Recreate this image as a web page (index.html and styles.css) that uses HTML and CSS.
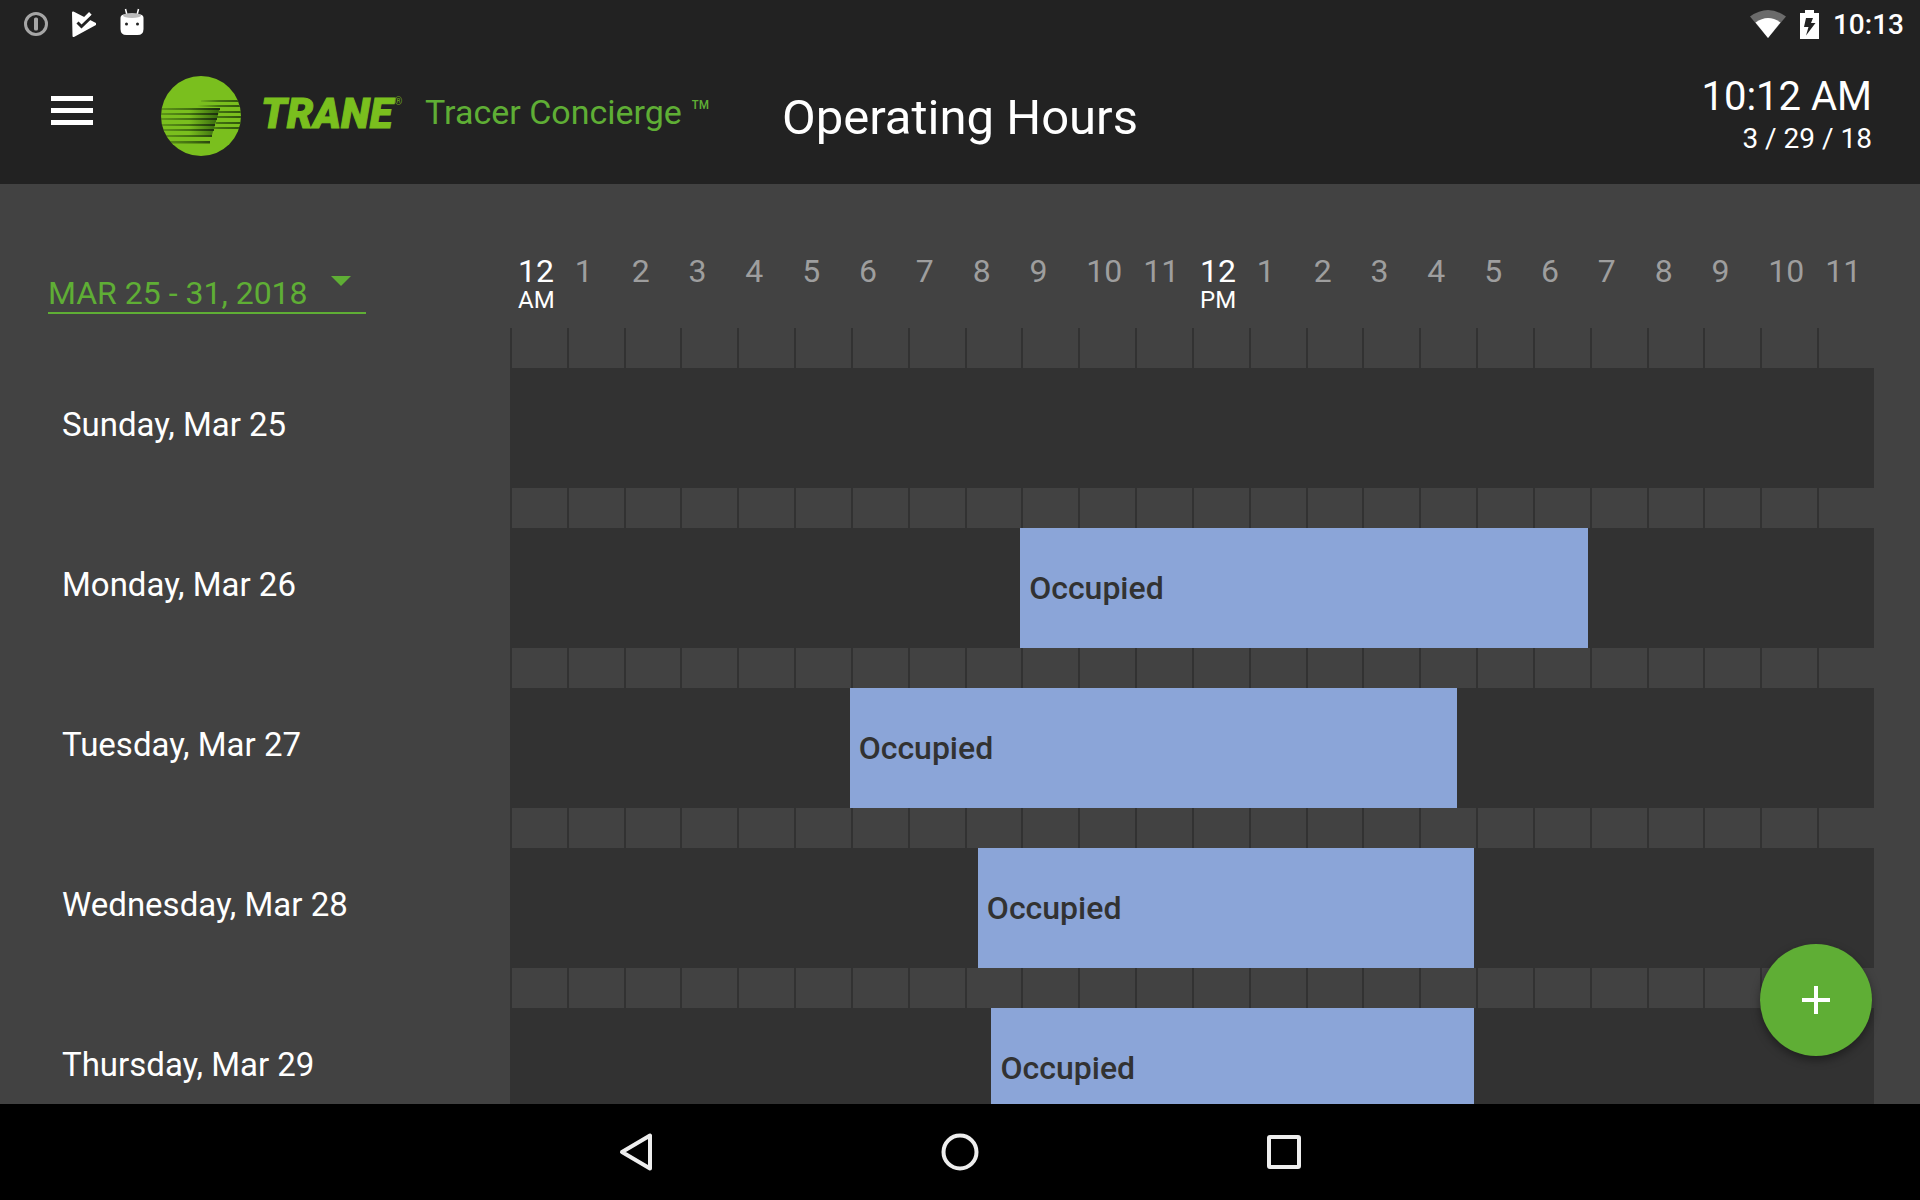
FILE: index.html
```html
<!DOCTYPE html>
<html lang="en">
<head>
<meta charset="utf-8">
<title>Operating Hours</title>
<link rel="stylesheet" href="styles.css">
</head>
<body>
<div class="status-bar">
  <div class="status-group notices">
    <svg class="status-icon" viewBox="0 0 24 32" aria-hidden="true"><circle cx="12" cy="16" r="10.500" fill="none" stroke="#a6a6a6" stroke-width="3"/><rect x="10" y="9.500" width="4" height="13" rx="1.500" fill="#a6a6a6"/></svg>
    <svg class="status-icon" viewBox="0 0 24 32" aria-hidden="true"><path d="M1 4.500 23.500 16 1.500 28z" fill="#fff" stroke="#fff" stroke-width="2" stroke-linejoin="round"/><path d="M12.500 8.500 17.500 5 20 8l-4 4" fill="#222"/><path d="m9.500 14.500 9-9" stroke="#fff" stroke-width="4" fill="none"/><path d="m5.500 14.500 4 4L22 6.500" stroke="#222" stroke-width="3" fill="none"/></svg>
    <svg class="status-icon" viewBox="0 0 24 32" aria-hidden="true"><path d="m5.500 1 1.500 6M18.500 1 17 7" stroke="#fff" stroke-width="1.500"/><path d="M.500 10q0-3 3-3.500h17q3 .500 3 3.500v11q0 6-6 6h-11q-6 0-6-6z" fill="#fff"/><ellipse cx="12" cy="7.500" rx="9" ry="2.500" fill="#bbb"/><circle cx="6.500" cy="16" r="1.500" fill="#222"/><circle cx="17.500" cy="16" r="1.500" fill="#222"/></svg>
  </div>
  <div class="status-group system">
    <svg class="wifi" viewBox="0 0 36 28" aria-hidden="true"><path d="M18 28 0 6.500Q18-6.500 36 6.500z" fill="#6b6b6b"/><path d="M18 28 5.500 12.500q12.500-9 25 0z" fill="#fff"/></svg>
    <svg class="battery" viewBox="0 0 19 29" aria-hidden="true"><path d="M0 3h5V0h9v3h5v26H0z" fill="#fff"/><path d="M6 8h7l-2 5h4.500L6 25.500 8.500 17H4z" fill="#222"/></svg>
    <span class="status-clock">10:13</span>
  </div>
</div>

<header class="app-bar">
  <button class="menu" type="button" aria-label="Menu"><span></span><span></span><span></span></button>
  <div class="brand">
    <svg class="emblem" viewBox="0 0 80 80" aria-hidden="true">
      <defs>
        <clipPath id="disc"><circle cx="40" cy="40" r="40"/></clipPath>
        <linearGradient id="fade-left" gradientUnits="userSpaceOnUse" x1="0" y1="0" x2="59" y2="0"><stop offset="0" stop-color="#1d3a08" stop-opacity=".3"/><stop offset=".5" stop-color="#1d3a08" stop-opacity=".6"/><stop offset="1" stop-color="#1a2810" stop-opacity=".95"/></linearGradient>
        <linearGradient id="fade-right" gradientUnits="userSpaceOnUse" x1="36" y1="0" x2="80" y2="0"><stop offset="0" stop-color="#1d3a08" stop-opacity="0"/><stop offset=".5" stop-color="#1d3a08" stop-opacity=".6"/><stop offset="1" stop-color="#1d3a08" stop-opacity=".8"/></linearGradient>
        <linearGradient id="stem" gradientUnits="userSpaceOnUse" x1="28" y1="0" x2="56" y2="0"><stop offset="0" stop-color="#24500a" stop-opacity="0"/><stop offset="1" stop-color="#24500a" stop-opacity=".75"/></linearGradient>
      </defs>
      <g clip-path="url(#disc)">
        <rect width="80" height="80" fill="#7abf1e"/>
        <path d="M28 32h31l-8 27H28z" fill="url(#stem)"/>
        <path d="M0 32h59v2H0zM0 37h57v2H0zM0 42h56v2H0zM0 48h54v2H0zM0 53h53v2H0zM0 59h51v2H0zM0 65h49v2.500H0z" fill="url(#fade-left)"/>
        <path d="M40 24h40v2H40zM36 29h44v2H36zM58 35h22v2H58zM56 40h24v2H56zM55 46h25v2H55zM53 51h27v2H53z" fill="url(#fade-right)"/>
      </g>
    </svg>
    <div class="wordmark">TRANE<sup>®</sup></div>
    <div class="product">Tracer Concierge ™</div>
  </div>
  <h1>Operating Hours</h1>
  <div class="now"><div class="time">10:12 AM</div><div class="date">3 / 29 / 18</div></div>
</header>

<main>
  <div class="chart-head">
    <div class="week">
      <select aria-label="Week"><option>MAR 25 - 31, 2018</option></select>
      <svg class="caret" viewBox="0 0 20 10" aria-hidden="true"><path d="M0 0h20L10 10z" fill="#5fae35"/></svg>
    </div>
    <div class="hours">
      <div class="noon">12<small>AM</small></div><div>1</div><div>2</div><div>3</div><div>4</div><div>5</div><div>6</div><div>7</div><div>8</div><div>9</div><div>10</div><div>11</div>
      <div class="noon">12<small>PM</small></div><div>1</div><div>2</div><div>3</div><div>4</div><div>5</div><div>6</div><div>7</div><div>8</div><div>9</div><div>10</div><div>11</div>
    </div>
  </div>
  <div class="chart">
    <div class="ticks" aria-hidden="true"><i></i><i></i><i></i><i></i><i></i><i></i><i></i><i></i><i></i><i></i><i></i><i></i><i></i><i></i><i></i><i></i><i></i><i></i><i></i><i></i><i></i><i></i><i></i><i></i></div>
    <div class="days">
      <div class="day"><div class="day-name">Sunday, Mar 25</div><div class="track"></div></div>
      <div class="day"><div class="day-name">Monday, Mar 26</div><div class="track"><button type="button" class="slot" style="margin-left:37.4%;width:41.6%">Occupied</button></div></div>
      <div class="day"><div class="day-name">Tuesday, Mar 27</div><div class="track"><button type="button" class="slot" style="margin-left:24.9%;width:44.5%">Occupied</button></div></div>
      <div class="day"><div class="day-name">Wednesday, Mar 28</div><div class="track"><button type="button" class="slot" style="margin-left:34.3%;width:36.4%">Occupied</button></div></div>
      <div class="day"><div class="day-name">Thursday, Mar 29</div><div class="track"><button type="button" class="slot" style="margin-left:35.3%;width:35.4%">Occupied</button></div></div>
    </div>
  </div>
  <button class="add" type="button" aria-label="Add"><svg viewBox="0 0 28 28" aria-hidden="true"><path d="M12 0h4v12h12v4H16v12h-4V16H0v-4h12z" fill="#fff"/></svg></button>
</main>

<nav class="nav-bar">
  <button type="button" aria-label="Back"><svg viewBox="0 0 40 40" aria-hidden="true"><path d="M34 3.500v33L6 20z"/></svg></button>
  <button type="button" aria-label="Home"><svg viewBox="0 0 40 40" aria-hidden="true"><circle cx="20" cy="20" r="16.500"/></svg></button>
  <button type="button" aria-label="Recent apps"><svg viewBox="0 0 40 40" aria-hidden="true"><rect x="5" y="5" width="30" height="30" rx="1"/></svg></button>
</nav>
</body>
</html>
```

FILE: styles.css
```css
*{box-sizing:border-box}
body{
  margin:0;
  height:100vh;
  display:flex;
  flex-direction:column;
  background:#424242;
  color:#fff;
  font-family:Roboto,sans-serif;
  font-size:32px;
  line-height:38px;
}
button,select{font:inherit;color:inherit;border:0;padding:0;margin:0;background:none;border-radius:0}

.status-bar{flex:none;display:flex;justify-content:space-between;align-items:center;background:#222;height:48px;padding:0 16px 0 24px}
.status-group{display:flex;align-items:center}
.notices{gap:24px}
.system{gap:14px}
.status-icon{width:24px;height:32px}
.wifi{width:36px;height:28px}
.battery{width:19px;height:29px}
.status-clock{padding-top:2px;font-size:28px;font-weight:500}

.app-bar{flex:none;display:flex;align-items:center;background:#222;height:136px;padding:0 48px 0 51px}
.menu{display:flex;flex-direction:column;gap:7px;width:42px;margin:0 68px 12px 0}
.menu span{height:5px;background:#fff}
.brand{display:flex;align-items:center;width:621px}
.emblem{width:80px;height:80px}
.wordmark{
  display:flex;
  width:164px;
  margin:0 0 4px 20px;
  color:#7abf1e;
  font-size:42px;
  font-weight:900;
  font-style:italic;
  line-height:48px;
  -webkit-text-stroke:1px #7abf1e;
}
.wordmark sup{padding-left:2px;font-size:10px;font-weight:400;font-style:normal;line-height:24px;opacity:.8;-webkit-text-stroke:0}
.product{margin-bottom:8px;color:#5fae35;font-size:34px}
h1{margin:0;padding-top:4px;font-size:49px;font-weight:400;line-height:56px}
.now{margin-left:auto;padding-top:2px;text-align:right}
.time{font-size:40px;line-height:44px}
.date{font-size:28px;line-height:40px}

main{position:relative;flex:1;min-height:0;overflow:hidden;padding:68px 46px 0 0}
.chart-head,.day,.chart{display:grid;grid-template-columns:510px 1fr}
.chart-head{height:76px}
.week{position:relative;width:318px;height:40px;margin:22px 0 0 48px;border-bottom:2px solid #5fae35}
.week select{appearance:none;width:100%;height:38px;color:#5fae35}
.caret{position:absolute;right:15px;top:2px;width:20px;height:10px;pointer-events:none}
.hours,.ticks{display:grid;grid-template-columns:repeat(24,1fr)}
.hours{padding-top:3px;color:#9e9e9e;line-height:32px}
.hours div{padding-left:8px}
.hours .noon{color:#fff}
.hours small{display:block;font-size:24px;line-height:26px}
.ticks{grid-column:2;grid-row:1}
.ticks i{border-left:2px solid #323232}
.days{grid-column:1/-1;grid-row:1;display:grid;gap:40px;padding-top:40px}
.day{height:120px}
.day-name{align-self:center;padding:0 0 6px 62px;font-size:33px}
.track{display:flex;background:#323232}
.slot{padding-left:9px;background:#8ba5d8;color:#323232;font-weight:500;text-align:left}

.add{
  position:absolute;
  right:48px;
  bottom:48px;
  width:112px;
  height:112px;
  display:grid;
  place-items:center;
  border-radius:50%;
  background:#5fae35;
  box-shadow:0 4px 10px rgba(0,0,0,.4);
}
.add svg{width:28px;height:28px}

.nav-bar{flex:none;display:flex;justify-content:center;align-items:center;gap:284px;height:96px;background:#000}
.nav-bar button{width:40px;height:40px}
.nav-bar svg{display:block;width:40px;height:40px;fill:none;stroke:#eee;stroke-width:4;stroke-linejoin:round}
```
